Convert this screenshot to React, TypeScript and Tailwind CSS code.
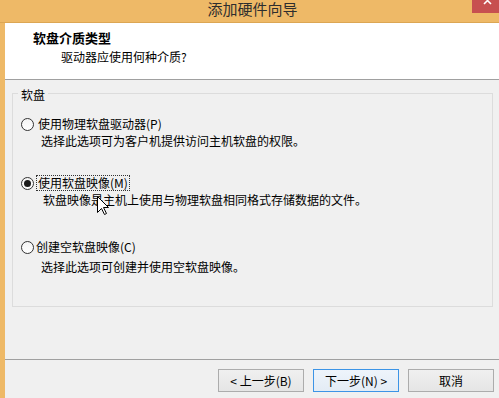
import React from "react";

const FONT = { fontFamily: '"Noto Sans CJK SC", "Noto Sans", sans-serif' };

function Radio({ checked }: { checked?: boolean }) {
  return (
    <span className="w-[13px] h-[13px] rounded-full border border-[#333333] bg-gradient-to-b from-[#f4f4f4] to-[#ffffff] flex items-center justify-center shrink-0">
      {checked && <span className="w-[7px] h-[7px] rounded-full bg-[#1b1b1b]" />}
    </span>
  );
}

function Btn({ children, primary }: { children: React.ReactNode; primary?: boolean }) {
  return (
    <div
      className={
        "w-[86px] h-[23px] flex items-center justify-center text-[12px] leading-[14px] text-black border " +
        (primary
          ? "border-[#3c94e6] bg-gradient-to-b from-[#eef4fb] to-[#e3ecf5]"
          : "border-[#acacac] bg-gradient-to-b from-[#f0f0f0] to-[#e5e5e5]")
      }
    >
      {children}
    </div>
  );
}

export default function App() {
  return (
    <div
      className="w-[499px] h-[398px] bg-[#eeb967] flex flex-col overflow-hidden relative"
      style={FONT}
    >
      {/* title bar */}
      <div className="h-[23px] border-b border-[#dca653] flex justify-center relative shrink-0">
        <span className="text-[15px] leading-[18px] text-[#2e2e2e] pl-[6px]">添加硬件向导</span>
        <div className="absolute right-0 top-0 w-[27px] h-[13px] bg-[#c75050] overflow-hidden flex justify-center">
          <svg width="10" height="13" viewBox="0 0 10 13" className="ml-[4px]">
            <path d="M1 -3 L8 4 M8 -3 L1 4" stroke="#ffffff" strokeWidth="1.6" />
          </svg>
        </div>
      </div>

      {/* client */}
      <div className="flex-1 ml-[5px] bg-[#f0f0f0] flex flex-col">
        {/* header */}
        <div className="h-[57px] bg-white border-b border-[#a0a0a0] pl-[28px] pt-[7px] shrink-0">
          <div className="text-[13px] leading-[16px] font-bold text-black">软盘介质类型</div>
          <div className="text-[12px] leading-[16px] text-black mt-[3px] pl-[28px]">驱动器应使用何种介质?</div>
        </div>

        {/* body */}
        <div className="flex-1 pt-[4px]">
          <fieldset className="ml-[7px] mr-[6px] border border-[#dcdcdc] h-[223px]">
            <legend className="ml-[5px] px-[3px] pt-[4px] text-[12px] leading-[14px] text-black">软盘</legend>
            <div className="pl-[8px] pt-[14px] flex flex-col text-[12px] text-black">
              <div className="flex items-center h-[16px]">
                <Radio />
                <span className="ml-[4px] leading-[16px]">使用物理软盘驱动器(P)</span>
              </div>
              <div className="pl-[20px] mt-[1px] leading-[16px]">选择此选项可为客户机提供访问主机软盘的权限。</div>

              <div className="flex items-center h-[16px] mt-[26px]">
                <Radio checked />
                <span className="ml-[2px] leading-[14px] border border-dotted border-[#333333] px-[1px]">使用软盘映像(M)</span>
              </div>
              <div className="pl-[22px] mt-[1px] leading-[16px]">软盘映像是主机上使用与物理软盘相同格式存储数据的文件。</div>

              <div className="flex items-center h-[16px] mt-[31px]">
                <Radio />
                <span className="ml-[2px] leading-[16px]">创建空软盘映像(C)</span>
              </div>
              <div className="pl-[20px] mt-[4px] leading-[16px]">选择此选项可创建并使用空软盘映像。</div>
            </div>
          </fieldset>
        </div>

        {/* footer */}
        <div className="h-[39px] border-t border-[#a0a0a0] flex justify-end items-start pt-[9px] pr-[5px] gap-[9px] shrink-0">
          <Btn>&lt; 上一步(B)</Btn>
          <Btn primary>下一步(N) &gt;</Btn>
          <Btn>取消</Btn>
        </div>
      </div>

      {/* mouse cursor */}
      <svg
        className="absolute left-[97px] top-[196px]"
        width="13"
        height="20"
        viewBox="0 0 13 20"
      >
        <path
          d="M0.5 0.5 L0.5 16.5 L4.5 12.5 L7.5 18.5 L9.5 17.5 L6.5 11.5 L11.5 11.5 Z"
          fill="#ffffff"
          stroke="#000000"
          strokeWidth="1"
          strokeLinejoin="miter"
        />
      </svg>
    </div>
  );
}
